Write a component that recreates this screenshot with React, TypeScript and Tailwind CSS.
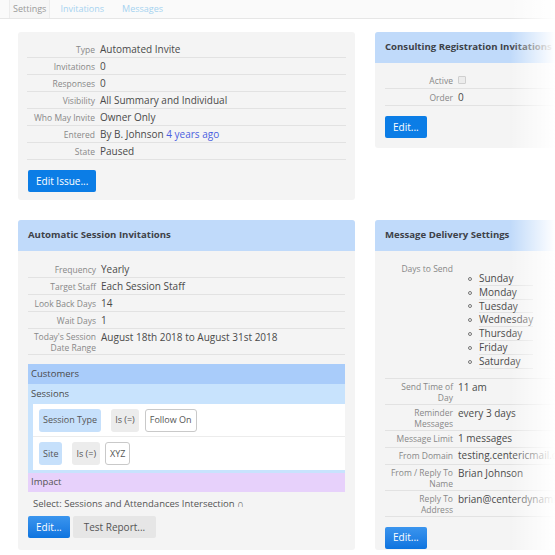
import React from "react";

type Row = { label: React.ReactNode; value: React.ReactNode; tall?: boolean };

function Rows({ rows }: { rows: Row[] }) {
  return (
    <div className="flex flex-col">
      {rows.map((row, i) => (
        <div
          key={i}
          className={`flex border-b border-[#e2e2e2] ${row.tall ? "h-[26px] pt-[2px]" : "h-[17px] items-center"}`}
        >
          <div className="w-[68px] shrink-0 text-right text-[8.5px] leading-[11px] text-[#888]">
            {row.label}
          </div>
          <div className="pl-[5px] text-[10px] leading-[13px] text-[#4a4a4a] whitespace-nowrap">
            {row.value}
          </div>
        </div>
      ))}
    </div>
  );
}

function Header({ title }: { title: string }) {
  return (
    <div className="flex h-[31px] items-center bg-[#c0dafa] px-[10px] text-[9.6px] font-bold text-[#3d4148] whitespace-nowrap">
      {title}
    </div>
  );
}

function BlueButton({ children, gradient }: { children: React.ReactNode; gradient?: boolean }) {
  return (
    <button
      className={`h-[22px] rounded-[2px] px-[8px] text-[10px] text-white ${gradient ? "bg-linear-to-b from-[#3a95ee] to-[#0c74df]" : "bg-[#0b7de6]"}`}
    >
      {children}
    </button>
  );
}

function Chip({ children, tone }: { children: React.ReactNode; tone: "blue" | "grey" | "white" }) {
  const cls =
    tone === "blue"
      ? "bg-[#c6e0fb]"
      : tone === "grey"
        ? "bg-[#ececec]"
        : "bg-white border border-[#c9c9c9]";
  return (
    <span className={`flex h-[23px] items-center rounded-[3px] px-[4px] text-[9px] text-[#555] ${cls}`}>
      {children}
    </span>
  );
}

const days = ["Sunday", "Monday", "Tuesday", "Wednesday", "Thursday", "Friday", "Saturday"];

export default function App() {
  return (
    <div
      className="relative h-[555px] w-[555px] overflow-hidden bg-white"
      style={{ fontFamily: '"Open Sans", "Liberation Sans", sans-serif' }}
    >
      <div className="flex h-[19px] items-end border-b border-[#e6e6e6] bg-[#fafafa] pl-[9px] text-[9px]">
        <div className="flex h-[19px] items-center border-x border-[#ececec] bg-[#f6f6f6] px-[3px] text-[#9a9a9a]">
          Settings
        </div>
        <div className="flex h-[19px] items-center px-[10px] text-[#a6d3f0]">Invitations</div>
        <div className="flex h-[19px] items-center px-[8px] text-[#a6d3f0]">Messages</div>
      </div>

      <div className="grid grid-cols-[337px_240px] items-start gap-x-[20px] gap-y-[20px] pl-[18px] pt-[13px]">
        <div className="h-[168px] rounded-[3px] bg-[#f4f4f4] px-[9px] pt-[9px]">
          <Rows
            rows={[
              { label: "Type", value: "Automated Invite" },
              { label: "Invitations", value: "0" },
              { label: "Responses", value: "0" },
              { label: "Visibility", value: "All Summary and Individual" },
              { label: "Who May Invite", value: "Owner Only" },
              {
                label: "Entered",
                value: (
                  <>
                    By B. Johnson <span className="text-[#4a5ee0]">4 years ago</span>
                  </>
                ),
              },
              { label: "State", value: "Paused" },
            ]}
          />
          <div className="mt-[10px] flex px-[1px]">
            <BlueButton>Edit Issue...</BlueButton>
          </div>
        </div>

        <div className="h-[116px] overflow-hidden rounded-[3px] bg-[#f4f4f4]">
          <Header title="Consulting Registration Invitations" />
          <div className="px-[10px] pt-[9px]">
            <Rows
              rows={[
                {
                  label: "Active",
                  value: (
                    <span className="mt-[2px] inline-block h-[8px] w-[8px] rounded-[1px] border border-[#cfcfcf] bg-[#ececec]" />
                  ),
                },
                { label: "Order", value: "0" },
              ]}
            />
            <div className="mt-[10px] flex">
              <BlueButton>Edit...</BlueButton>
            </div>
          </div>
        </div>

        <div className="h-[330px] overflow-hidden rounded-[3px] bg-[#f4f4f4]">
          <Header title="Automatic Session Invitations" />
          <div className="px-[10px] pt-[10px]">
            <Rows
              rows={[
                { label: "Frequency", value: "Yearly" },
                { label: "Target Staff", value: "Each Session Staff" },
                { label: "Look Back Days", value: "14" },
                { label: "Wait Days", value: "1" },
                {
                  label: (
                    <>
                      Today's Session
                      <br />
                      Date Range
                    </>
                  ),
                  value: "August 18th 2018 to August 31st 2018",
                  tall: true,
                },
              ]}
            />
            <div className="mt-[9px] flex h-[20px] items-center bg-[#a9ccfa] px-[3px] text-[9.5px] text-[#4a4a4a]">
              Customers
            </div>
            <div className="bg-[#c8e3fd] pb-[3px] pl-[5px]">
              <div className="-ml-[2px] flex h-[20px] items-center text-[9.5px] text-[#4a4a4a]">
                Sessions
              </div>
              <div className="bg-white">
                <div className="flex h-[33px] items-center gap-[10px] border-b border-[#ececec] pl-[6px]">
                  <Chip tone="blue">Session Type</Chip>
                  <Chip tone="grey">Is (=)</Chip>
                  <span className="-ml-[4px]">
                    <Chip tone="white">Follow On</Chip>
                  </span>
                </div>
                <div className="flex h-[33px] items-center gap-[10px] pl-[6px]">
                  <Chip tone="blue">Site</Chip>
                  <Chip tone="grey">Is (=)</Chip>
                  <span className="-ml-[5px]">
                    <Chip tone="white">XYZ</Chip>
                  </span>
                </div>
              </div>
            </div>
            <div className="flex h-[19px] items-center bg-[#e7d1fb] px-[3px] text-[9.5px] text-[#555]">
              Impact
            </div>
            <div className="flex h-[24px] items-center px-[5px] text-[9.5px] text-[#555]">
              Select: Sessions and Attendances Intersection ∩
            </div>
            <div className="flex gap-[3px]">
              <BlueButton gradient>Edit...</BlueButton>
              <button className="h-[22px] rounded-[2px] bg-[#e6e6e6] px-[11px] text-[10px] text-[#555]">
                Test Report...
              </button>
            </div>
          </div>
        </div>

        <div className="h-[330px] overflow-hidden rounded-[3px] bg-[#f4f4f4]">
          <Header title="Message Delivery Settings" />
          <div className="px-[10px] pt-[10px]">
            <div className="flex border-b border-[#e2e2e2] pb-[9px]">
              <div className="w-[68px] shrink-0 pt-[2px] text-right text-[8.5px] leading-[11px] text-[#888]">
                Days to Send
              </div>
              <ul className="mt-[11px] w-[80px] pl-[15px]">
                {days.map((d) => (
                  <li key={d} className="flex h-[13.8px] items-center text-[10px] text-[#4a4a4a]">
                    <span className="mr-[7px] h-[4px] w-[4px] shrink-0 rounded-full border border-[#777]" />
                    <span className="flex h-full flex-1 items-center border-b border-[#e2e2e2]">{d}</span>
                  </li>
                ))}
              </ul>
            </div>
            <Rows
              rows={[
                { label: <>Send Time of<br />Day</>, value: "11 am", tall: true },
                { label: <>Reminder<br />Messages</>, value: "every 3 days", tall: true },
                { label: "Message Limit", value: "1 messages" },
                { label: "From Domain", value: "testing.centericmail.com" },
                { label: <>From / Reply To<br />Name</>, value: "Brian Johnson", tall: true },
                { label: <>Reply To<br />Address</>, value: "brian@centerdynamics.com", tall: true },
              ]}
            />
            <div className="mt-[10px] flex">
              <BlueButton gradient>Edit...</BlueButton>
            </div>
          </div>
        </div>
      </div>

      <div className="pointer-events-none absolute right-0 top-0 h-full w-[45px] bg-linear-to-r from-white/0 to-white" />
    </div>
  );
}
